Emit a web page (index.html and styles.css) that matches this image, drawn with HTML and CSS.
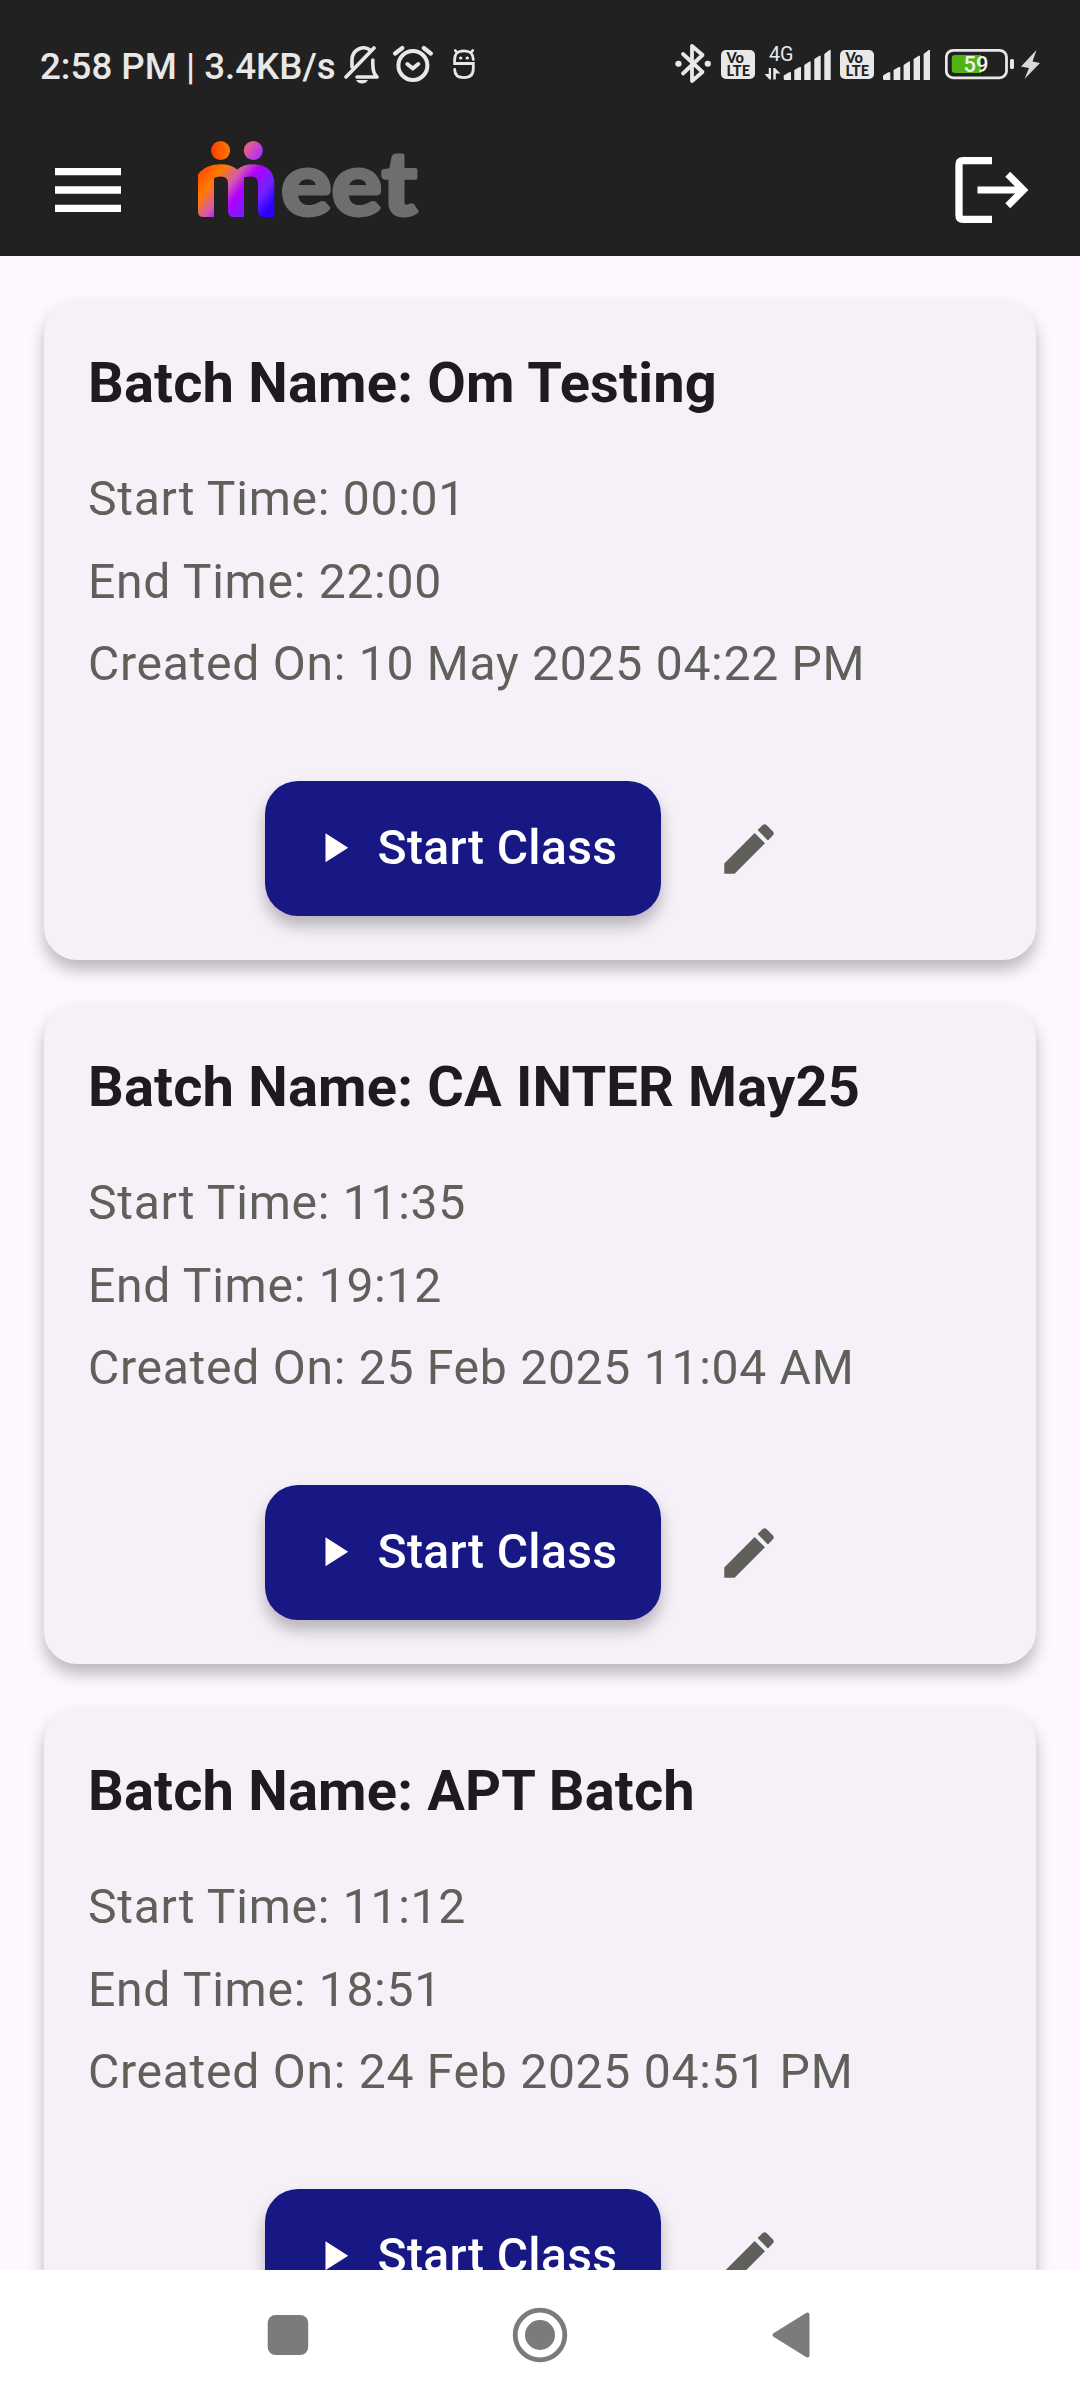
FILE: index.html
```html
<!DOCTYPE html>
<html lang="en">
<head>
<meta charset="utf-8">
<title>Meet</title>
<link rel="stylesheet" href="styles.css">
</head>
<body>
<div class="screen">
  <header class="header">
    <div class="status">
      <span class="status-text">2:58 PM | 3.4KB/s</span>
      <svg class="bell" width="36" height="50" viewBox="344 40 36 50" fill="none" stroke="#e8e8e8" stroke-width="3.6" stroke-linecap="round" stroke-linejoin="round"><path d="M352 67V60C352 49 365 44 371 51M372.800 60C372.500 71 374 74 377 77V77H357M346 77L374 48"/><path d="M356 80H368Q366 83.500 362 83.500Q358 83.500 356 80Z" fill="#e8e8e8" stroke="none"/></svg>
      <svg class="alarm" width="40" height="50" viewBox="392.700 40 40 50" fill="none" stroke="#e8e8e8" stroke-width="4" stroke-linecap="round" stroke-linejoin="round"><circle cx="412.600" cy="65.500" r="14.500"/><path d="M407 64L412.500 68.500L418 64"/><path d="M394.800 53.500L402 48M430.500 53.500L423.500 48" stroke-width="4.200"/></svg>
      <svg class="droid" width="24" height="50" viewBox="452 40 24 50" fill="none" stroke="#e8e8e8" stroke-width="2.800" stroke-linecap="round"><path d="M473.300 59.500C473 53 470 50.800 464 50.800C457 50.800 454.600 54 454.600 60V63.500H473.300V68.500C473.300 74.500 470 77.600 464 77.600C458 77.600 454.700 74.500 454.700 69.500M456.500 52L455.300 50.500M471.500 52L472.700 50.500"/><path d="M460.600 58H460.800M467.200 58H467.400" stroke-width="3.200"/></svg>
      <svg class="bluetooth" width="36" height="50" viewBox="675 40 36 50" fill="none" stroke="#e8e8e8" stroke-width="3.800" stroke-linecap="round" stroke-linejoin="round"><path d="M683 54L702.500 72L692 81V46L702.500 55L683 73.500"/><path d="M678.300 63.800H678.600M707.600 63.800H707.900" stroke-width="6"/></svg>
      <svg class="volte" width="34" height="50" viewBox="0 0 34 50"><rect y="10" width="34" height="29" rx="5" fill="#e8e8e8"/><text x="5.500" y="23.200" class="volte-text" textLength="17.500" lengthAdjust="spacingAndGlyphs">Vo</text><text x="5.500" y="35.700" class="volte-text" textLength="23.500" lengthAdjust="spacingAndGlyphs">LTE</text></svg>
      <svg class="signal-data" width="67" height="50" viewBox="764 40 67 50" fill="#e8e8e8"><text x="769" y="61" class="net" textLength="24.500" lengthAdjust="spacingAndGlyphs">4G</text><path d="M768.800 68H771V79.500H769.500L764.500 74H768.800ZM773.300 68H775L780.500 73.500H775.800V79.500H773.300Z"/><path id="bars" d="M783.700 75.500L789 72.300H791V80H785Q783.700 80 783.700 78.500ZM794.300 70L799.500 67H801V80H794.300ZM804.300 65L809.500 61.500H810.700V80H804.300ZM814.300 59L819.500 55.700H820.700V80H814.300ZM824.300 54L829.500 50H830.700V80H824.300Z"/></svg>
      <svg class="volte second" width="34" height="50" viewBox="0 0 34 50"><rect y="10" width="34" height="29" rx="5" fill="#e8e8e8"/><text x="5.500" y="23.200" class="volte-text" textLength="17.500" lengthAdjust="spacingAndGlyphs">Vo</text><text x="5.500" y="35.700" class="volte-text" textLength="23.500" lengthAdjust="spacingAndGlyphs">LTE</text></svg>
      <svg class="signal" width="48" height="50" viewBox="783.700 40 48 50" fill="#e8e8e8"><use href="#bars"/></svg>
      <svg class="battery" width="70" height="50" viewBox="945 40 70 50"><rect x="946.300" y="50.300" width="60.200" height="27.600" rx="7" fill="none" stroke="#e8e8e8" stroke-width="2.800"/><path d="M955 55H981V73H955Q951.800 73 951.800 70V58Q951.800 55 955 55Z" fill="#52b315"/><rect x="1010" y="59" width="4" height="10" rx="1.500" fill="#e8e8e8"/><text x="963.600" y="72.300" class="level" textLength="25" lengthAdjust="spacingAndGlyphs">59</text></svg>
      <svg class="bolt" width="20" height="50" viewBox="1021 40 20 50" fill="#d9d9d9"><path d="M1036.500 50L1021 66.500L1029 68L1024.500 79L1040 63L1032.500 61.500Z"/></svg>
    </div>
    <div class="appbar">
      <svg width="88" height="88" viewBox="0 0 24 24" fill="#fff"><path d="M3 18h18v-2H3v2zm0-5h18v-2H3v2zm0-7v2h18V6H3z"/></svg>
      <svg class="logo" width="226" height="104" viewBox="196 138 226 104">
        <defs>
          <linearGradient id="body" gradientUnits="userSpaceOnUse" x1="198" y1="164" x2="267" y2="218"><stop offset="0" stop-color="#ff3d00"/><stop offset=".25" stop-color="#ff7a00"/><stop offset=".43" stop-color="#d45ab0"/><stop offset=".57" stop-color="#b000ff"/><stop offset=".78" stop-color="#7322ff"/><stop offset=".95" stop-color="#2a00ff"/></linearGradient>
          <linearGradient id="headA"><stop offset="0" stop-color="#ff3d00"/><stop offset="1" stop-color="#ff7a00"/></linearGradient>
          <linearGradient id="headB" x2="1" y2=".6"><stop offset="0" stop-color="#f2706c"/><stop offset="1" stop-color="#b22cff"/></linearGradient>
        </defs>
        <ellipse cx="220.600" cy="150.500" rx="9.500" ry="9.600" fill="url(#headA)"/>
        <ellipse cx="253.300" cy="150.500" rx="9.500" ry="9.600" fill="url(#headB)"/>
        <path fill="url(#body)" d="M198 212V174.500C203 167.500 211 164.300 221 164.300Q231 164.300 237.300 169.500Q243 164.300 253 164.300C266 164.300 274.300 171 274.300 183V217H264Q258 217 258 211V183Q258 176.500 251 176.500Q244 176.500 244 178V217H234Q228 217 228 211V183Q228 176.500 221 176.500Q214 176.500 214 179V217H203.500Q198 217 198 212Z"/>
        <text x="281" y="214.500" class="logo-text" textLength="136" lengthAdjust="spacingAndGlyphs">eet</text>
      </svg>
      <svg class="logout" width="74" height="88" viewBox="955 146 74 88"><path d="M992 160.700H963Q959 160.700 959 164.700V215.300Q959 219.300 963 219.300H992" fill="none" stroke="#fff" stroke-width="7.300"/><path fill="#fff" d="M977.500 186.400H1015L1005.300 176.700L1010.200 171.800L1028.400 190L1010.200 208.200L1005.300 203.300L1015 193.600H977.500Z"/></svg>
    </div>
  </header>
  <main class="list">
    <section class="card">
      <h2>Batch Name: Om Testing</h2>
      <p>Start Time: 00:01</p><p>End Time: 22:00</p><p>Created On: 10 May 2025 04:22 PM</p>
      <div class="actions"><button class="start"><svg width="49.500" height="49.500" viewBox="0 0 24 24" fill="#fff"><path d="M8 5v14l11-7z"/></svg><span>Start Class</span></button><svg class="edit" width="66" height="66" viewBox="0 0 24 24"><path d="M3 17.250V21h3.750L17.810 9.940l-3.750-3.750L3 17.250zM20.710 7.040c.390-.390.390-1.020 0-1.410l-2.340-2.340c-.390-.390-1.020-.390-1.410 0l-1.830 1.830 3.750 3.750 1.830-1.830z"/></svg></div>
    </section>
    <section class="card">
      <h2>Batch Name: CA INTER May25</h2>
      <p>Start Time: 11:35</p><p>End Time: 19:12</p><p>Created On: 25 Feb 2025 11:04 AM</p>
      <div class="actions"><button class="start"><svg width="49.500" height="49.500" viewBox="0 0 24 24" fill="#fff"><path d="M8 5v14l11-7z"/></svg><span>Start Class</span></button><svg class="edit" width="66" height="66" viewBox="0 0 24 24"><path d="M3 17.250V21h3.750L17.810 9.940l-3.750-3.750L3 17.250zM20.710 7.040c.390-.390.390-1.020 0-1.410l-2.340-2.340c-.390-.390-1.020-.390-1.410 0l-1.830 1.830 3.750 3.750 1.830-1.830z"/></svg></div>
    </section>
    <section class="card">
      <h2>Batch Name: APT Batch</h2>
      <p>Start Time: 11:12</p><p>End Time: 18:51</p><p>Created On: 24 Feb 2025 04:51 PM</p>
      <div class="actions"><button class="start"><svg width="49.500" height="49.500" viewBox="0 0 24 24" fill="#fff"><path d="M8 5v14l11-7z"/></svg><span>Start Class</span></button><svg class="edit" width="66" height="66" viewBox="0 0 24 24"><path d="M3 17.250V21h3.750L17.810 9.940l-3.750-3.750L3 17.250zM20.710 7.040c.390-.390.390-1.020 0-1.410l-2.340-2.340c-.390-.390-1.020-.390-1.410 0l-1.830 1.830 3.750 3.750 1.830-1.830z"/></svg></div>
    </section>
  </main>
  <nav class="nav">
    <svg width="60" height="60" viewBox="-30 -30 60 60"><rect x="-20.300" y="-20" width="40.500" height="40" rx="8"/></svg>
    <svg width="60" height="60" viewBox="-30 -30 60 60"><circle r="24.800" fill="none" stroke="#7b7b7b" stroke-width="4.800"/><circle r="15"/></svg>
    <svg width="60" height="60" viewBox="-30 -30 60 60"><path d="M-16.500 0L16.500-20.500V20.500Z" stroke="#7b7b7b" stroke-width="4" stroke-linejoin="round"/></svg>
  </nav>
</div>
</body>
</html>
```
FILE: styles.css
```css
* { box-sizing: border-box; }
body { margin: 0; font-family: Roboto, sans-serif; }
svg { display: block; flex: none; }
h2, p { margin: 0; white-space: nowrap; }
.screen { width: 1080px; height: 2400px; display: flex; flex-direction: column; overflow: hidden; background: #fef7ff; }
.header { height: 256px; flex: none; background: #212121; padding-top: 40px; }
.status { display: flex; height: 50px; padding-left: 40px; }
.status-text { width: 304px; line-height: 53px; font-size: 36.700px; font-weight: 500; color: #e8e8e8; white-space: nowrap; }
.alarm { margin-left: 12.700px; }
.droid { margin-left: 19.300px; }
.bluetooth { margin-left: 199px; }
.volte { margin-left: 10px; }
.volte-text { font: 900 14.500px Lato, sans-serif; fill: #212121; }
.signal-data { margin-left: 9px; }
.net { font: 400 20px Roboto, sans-serif; }
.volte.second { margin-left: 9px; }
.signal { margin-left: 9.300px; }
.battery { margin-left: 13.700px; }
.level { font: 500 21.500px Roboto, sans-serif; fill: #f2f2f2; }
.bolt { margin-left: 6px; }
.appbar { display: flex; align-items: center; padding: 48px 51px 0 44px; }
.logo { margin-left: 64px; }
.logo-text { font: 700 88px Lato, sans-serif; fill: #6e6e6e; stroke: #6e6e6e; stroke-width: 4px; stroke-linejoin: round; }
.logout { margin-left: auto; }
.list { flex: 1; min-height: 0; overflow: hidden; display: flex; flex-direction: column; gap: 44px; padding: 44px 44px 0; }
.card { flex: none; height: 660px; padding: 44px; border-radius: 33px; background: #f6f1f9; box-shadow: 0 10px 16px rgba(0,0,0,.26); color: #60605a; font-size: 48.100px; letter-spacing: .700px; line-height: 82.500px; }
.card h2 { margin-bottom: 36px; font-size: 56px; font-weight: 700; line-height: 78px; letter-spacing: .180px; color: #1d1b20; }
.actions { display: flex; align-items: center; margin: 75px 0 0 177px; }
.start { display: flex; align-items: center; gap: 19px; width: 396px; height: 135px; padding: 0 0 0 44px; border: 0; border-radius: 33px; background: #181885; color: #fff; font: 500 48.100px/66px Roboto, sans-serif; letter-spacing: .320px; white-space: nowrap; box-shadow: 0 10px 16px rgba(0,0,0,.26); }
.start span { padding-bottom: 1px; }
.edit { margin: 1px 0 0 55px; fill: #60605a; }
.nav { flex: none; height: 130px; display: flex; align-items: center; gap: 192px; padding-left: 258px; background: #fff; fill: #7b7b7b; }
.nav svg:nth-child(2) { margin: 0 -1px 0 0; }
```
